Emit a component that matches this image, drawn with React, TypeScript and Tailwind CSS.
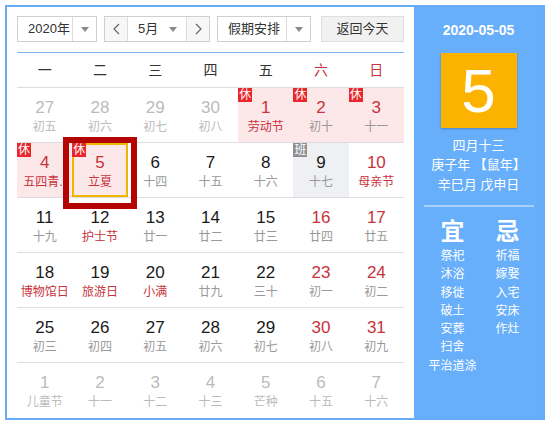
type Cell = {
  d: number;
  l: string;
  muted?: boolean;
  red?: boolean;
  fest?: boolean;
  badge?: '休' | '班';
  sel?: boolean;
};

const ROWS: Cell[][] = [
  [
    { d: 27, l: '初五', muted: true },
    { d: 28, l: '初六', muted: true },
    { d: 29, l: '初七', muted: true },
    { d: 30, l: '初八', muted: true },
    { d: 1, l: '劳动节', red: true, fest: true, badge: '休' },
    { d: 2, l: '初十', red: true, badge: '休' },
    { d: 3, l: '十一', red: true, badge: '休' },
  ],
  [
    { d: 4, l: '五四青..', red: true, fest: true, badge: '休' },
    { d: 5, l: '立夏', red: true, fest: true, badge: '休', sel: true },
    { d: 6, l: '十四' },
    { d: 7, l: '十五' },
    { d: 8, l: '十六' },
    { d: 9, l: '十七', badge: '班' },
    { d: 10, l: '母亲节', red: true, fest: true },
  ],
  [
    { d: 11, l: '十九' },
    { d: 12, l: '护士节', fest: true },
    { d: 13, l: '廿一' },
    { d: 14, l: '廿二' },
    { d: 15, l: '廿三' },
    { d: 16, l: '廿四', red: true },
    { d: 17, l: '廿五', red: true },
  ],
  [
    { d: 18, l: '博物馆日', fest: true },
    { d: 19, l: '旅游日', fest: true },
    { d: 20, l: '小满', fest: true },
    { d: 21, l: '廿九' },
    { d: 22, l: '三十' },
    { d: 23, l: '初一', red: true },
    { d: 24, l: '初二', red: true },
  ],
  [
    { d: 25, l: '初三' },
    { d: 26, l: '初四' },
    { d: 27, l: '初五' },
    { d: 28, l: '初六' },
    { d: 29, l: '初七' },
    { d: 30, l: '初八', red: true },
    { d: 31, l: '初九', red: true },
  ],
  [
    { d: 1, l: '儿童节', muted: true },
    { d: 2, l: '十一', muted: true },
    { d: 3, l: '十二', muted: true },
    { d: 4, l: '十三', muted: true },
    { d: 5, l: '芒种', muted: true },
    { d: 6, l: '十五', muted: true },
    { d: 7, l: '十六', muted: true },
  ],
];

const WEEK = ['一', '二', '三', '四', '五', '六', '日'];
const YI = ['祭祀', '沐浴', '移徙', '破土', '安葬', '扫舍', '平治道涂'];
const JI = ['祈福', '嫁娶', '入宅', '安床', '作灶'];

function Caret() {
  return (
    <svg width="8" height="5" viewBox="0 0 8 5">
      <path d="M0 0h8L4 5z" fill="#888" />
    </svg>
  );
}

function Chevron({ dir }: { dir: 'l' | 'r' }) {
  return (
    <svg width="7" height="12" viewBox="0 0 7 12">
      <path
        d={dir === 'l' ? 'M6 1L1 6l5 5' : 'M1 1l5 5-5 5'}
        fill="none"
        stroke="#666"
        strokeWidth="1.2"
      />
    </svg>
  );
}

function DayCell({ c }: { c: Cell }) {
  let bg = '';
  if (c.badge === '休') bg = 'bg-[#fde8e9]';
  if (c.badge === '班') bg = 'bg-[#eef0f3]';

  const numColor = c.muted ? 'text-[#bbbbbb]' : c.red ? 'text-[#c8323b]' : 'text-[#1a1a1a]';
  const lunColor = c.muted ? 'text-[#bbbbbb]' : c.fest ? 'text-[#c8323b]' : 'text-[#999999]';

  return (
    <div className={`relative h-[54px] pt-[9px] text-center ${bg}`}>
      {c.sel && (
        <div className="pointer-events-none absolute inset-0 border-2 border-[#f2b600]" />
      )}
      {c.sel && (
        <div className="absolute -left-[9px] -top-[6px] z-10 h-[72px] w-[74px] border-[6px] border-[#b40404]" />
      )}
      {c.badge && (
        <span
          className={`absolute left-0 top-0 flex h-[14px] w-[14px] items-center justify-center text-[12px] leading-none text-white ${
            c.badge === '休' ? 'bg-[#e8262b]' : 'bg-[#8f8f8f]'
          }`}
        >
          {c.badge}
        </span>
      )}
      <div className={`text-[17px] leading-[22px] ${numColor}`}>{c.d}</div>
      <div className={`whitespace-nowrap text-[12px] leading-[16px] ${lunColor}`}>{c.l}</div>
    </div>
  );
}

export default function App() {
  return (
    <div
      className="h-[427px] w-[549px] bg-white p-[5px]"
      style={{ fontFamily: '"Liberation Sans", "Noto Sans CJK SC", sans-serif' }}
    >
      <div className="flex h-[415px] w-[540px] border-2 border-[#68acf6]">
        {/* calendar */}
        <div className="w-[407px] shrink-0 bg-white px-[10px] pt-[9px]">
          <div className="flex h-[26px] items-stretch whitespace-nowrap text-[13px] text-[#333]">
            <div className="flex w-[80px] border border-[#cfcfcf]">
              <span className="flex flex-1 items-center pl-[10px]">2020年</span>
              <span className="flex w-[24px] shrink-0 items-center justify-center border-l border-[#dcdcdc]">
                <Caret />
              </span>
            </div>
            <div className="ml-[7px] flex w-[106px] border border-[#cfcfcf]">
              <span className="flex w-[23px] items-center justify-center border-r border-[#dcdcdc] bg-[#f7f7f7]">
                <Chevron dir="l" />
              </span>
              <span className="flex flex-1 items-center justify-between pl-[10px] pr-[9px]">
                5月
                <Caret />
              </span>
              <span className="flex w-[23px] items-center justify-center border-l border-[#dcdcdc] bg-[#f7f7f7]">
                <Chevron dir="r" />
              </span>
            </div>
            <div className="ml-[7px] flex w-[94px] border border-[#cfcfcf]">
              <span className="flex flex-1 items-center pl-[10px]">假期安排</span>
              <span className="flex w-[24px] shrink-0 items-center justify-center border-l border-[#dcdcdc]">
                <Caret />
              </span>
            </div>
            <div className="ml-[10px] flex w-[83px] items-center justify-center border border-[#dedede] bg-[#f1f1f1]">
              返回今天
            </div>
          </div>

          <div className="mt-[10px] h-px bg-[#7fb2e6]" />

          <div className="grid h-[34px] grid-cols-7 items-center text-center text-[14px]">
            {WEEK.map((w, i) => (
              <span key={w} className={i >= 5 ? 'text-[#c8323b]' : 'text-[#333]'}>
                {w}
              </span>
            ))}
          </div>

          {ROWS.map((row, r) => (
            <div key={r} className="grid grid-cols-7 border-t border-[#dddddd]">
              {row.map((c, i) => (
                <DayCell key={i} c={c} />
              ))}
            </div>
          ))}
        </div>

        {/* side panel */}
        <div className="flex flex-1 flex-col items-center bg-[#67aefb] text-white">
          <div className="mt-[13px] text-[14px] font-bold leading-[20px]">2020-05-05</div>
          <div className="mt-[13px] flex h-[75px] w-[76px] items-center justify-center bg-[#fcb300] text-[62px] leading-none shadow-[0_1px_2px_rgba(0,0,0,0.25)]">
            5
          </div>
          <div className="mt-[8px] text-[13px] leading-[19px]">四月十三</div>
          <div className="text-[13px] leading-[20px]">庚子年 【鼠年】</div>
          <div className="text-[13px] leading-[20px]">辛巳月 戊申日</div>
          <div className="mt-[10px] h-[2px] w-[110px] bg-[#a9cffb]" />
          <div className="mt-[10px] flex w-full justify-center gap-[5px] pl-[3px]">
            <div className="flex w-[50px] flex-col items-center">
              <span className="text-[24px] font-bold leading-[30px]">宜</span>
              {YI.map((t) => (
                <span key={t} className="whitespace-nowrap text-[12px] leading-[18.3px]">
                  {t}
                </span>
              ))}
            </div>
            <div className="flex w-[50px] flex-col items-center">
              <span className="text-[24px] font-bold leading-[30px]">忌</span>
              {JI.map((t) => (
                <span key={t} className="text-[12px] leading-[18.3px]">
                  {t}
                </span>
              ))}
            </div>
          </div>
        </div>
      </div>
    </div>
  );
}
